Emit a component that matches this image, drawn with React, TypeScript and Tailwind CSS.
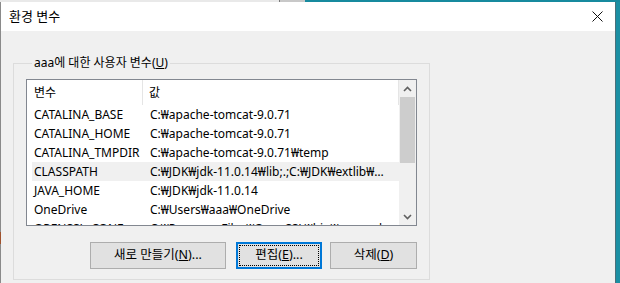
import React from "react";

const rows = [
  { name: "CATALINA_BASE", value: "C:₩apache-tomcat-9.0.71" },
  { name: "CATALINA_HOME", value: "C:₩apache-tomcat-9.0.71" },
  { name: "CATALINA_TMPDIR", value: "C:₩apache-tomcat-9.0.71₩temp" },
  { name: "CLASSPATH", value: "C:₩JDK₩jdk-11.0.14₩lib;.;C:₩JDK₩extlib₩mysql-connector.jar", hot: true },
  { name: "JAVA_HOME", value: "C:₩JDK₩jdk-11.0.14" },
  { name: "OneDrive", value: "C:₩Users₩aaa₩OneDrive" },
  { name: "OPENSSL_CONF", value: "C:₩Program Files₩OpenSSL₩bin₩openssl.cfg" },
];

const font = { fontFamily: '"Noto Sans", "Noto Sans CJK KR", sans-serif' };

const Chevron = ({ down }: { down?: boolean }) => (
  <svg width="9" height="6" viewBox="0 0 9 6" className={down ? "rotate-180" : ""}>
    <path d="M1 5 L4.5 1.5 L8 5" stroke="#606060" strokeWidth="1.6" fill="none" />
  </svg>
);

const App = () => {
  return (
    <div className="w-[620px] h-[283px] overflow-hidden flex flex-col bg-[#1b8fa3]" style={font}>
      {/* desktop strip above the window */}
      <div className="h-[2px] flex">
        <div className="w-[279px] bg-[#e9e9e9]" />
        <div className="w-px bg-[#7a7a7a]" />
        <div className="w-[25px] bg-[#c8c8c8]" />
        <div className="flex-1 bg-[#178a9e]" />
      </div>

      <div className="flex flex-1">
        <div className="w-px flex flex-col">
          <div className="h-[230px] bg-[#8a8a8a]" />
          <div className="h-[12px] bg-[#a0522d]" />
          <div className="flex-1 bg-[#8a8a8a]" />
        </div>

        {/* dialog */}
        <div className="w-[615px] flex flex-col bg-[#f0f0f0] border-r border-[#4a6f7a]">
          <div className="h-[29px] bg-white flex items-center justify-between pl-[8px] pr-[12px]">
            <span className="text-[13px] text-black leading-none">환경 변수</span>
            <svg width="11" height="11" viewBox="0 0 11 11">
              <path d="M0.5 0.5 L10.5 10.5 M10.5 0.5 L0.5 10.5" stroke="#111" strokeWidth="1" />
            </svg>
          </div>

          <div className="pl-[12px] pt-[24px]">
            <fieldset className="w-[417px] min-w-0 h-[225px] border border-[#dcdcdc] px-[12px] pt-[8px]">
              <legend className="ml-[6px] px-[2px] text-[12px] text-black leading-[16px]">
                aaa에 대한 사용자 변수(<span className="underline">U</span>)
              </legend>

              {/* list view */}
              <div className="w-[391px] h-[147px] border border-[#828790] bg-white flex overflow-hidden">
                <div className="flex-1 min-w-0 flex flex-col overflow-hidden">
                  <div className="h-[25px] shrink-0 flex items-center text-[12px] text-black">
                    <div className="w-[116px] h-full pl-[7px] flex items-center border-r border-[#e5e5e5]">변수</div>
                    <div className="flex-1 h-full pl-[6px] flex items-center border-r border-[#e5e5e5]">값</div>
                  </div>
                  {rows.map((r) => (
                    <div key={r.name} className="h-[19px] shrink-0 flex items-center text-[12px] text-black">
                      <div className={`flex h-full flex-1 min-w-0 ml-[5px] items-center ${r.hot ? "bg-[#f0f0f0]" : ""}`}>
                        <div className="w-[111px] shrink-0 pl-[2px] whitespace-nowrap">{r.name}</div>
                        <div className="flex-1 min-w-0 pl-[7px] pr-[6px] truncate">{r.value}</div>
                      </div>
                    </div>
                  ))}
                </div>

                {/* scrollbar */}
                <div className="w-[17px] shrink-0 bg-[#f0f0f0] flex flex-col">
                  <div className="h-[17px] flex items-center justify-center">
                    <Chevron />
                  </div>
                  <div className="h-[66px] mx-[1px] bg-[#cdcdcd]" />
                  <div className="flex-1" />
                  <div className="h-[17px] flex items-center justify-center">
                    <Chevron down />
                  </div>
                </div>
              </div>

              {/* buttons */}
              <div className="w-[391px] flex justify-end gap-[8px] mt-[16px] text-[12.5px] text-black">
                <button className="w-[136px] h-[27px] bg-[#e1e1e1] border border-[#adadad] mr-[2px]">
                  새로 만들기(<span className="underline">N</span>)...
                </button>
                <button className="w-[86px] h-[27px] bg-[#e1e1e1] border-2 border-[#0078d7] p-[1px]">
                  <div className="w-full h-full border border-dotted border-black flex items-center justify-center">
                    편집(<span className="underline">E</span>)...
                  </div>
                </button>
                <button className="w-[87px] h-[27px] bg-[#e1e1e1] border border-[#adadad]">
                  삭제(<span className="underline">D</span>)
                </button>
              </div>
            </fieldset>
          </div>
        </div>

        <div className="flex-1 bg-[#1b8fa3]" />
      </div>
    </div>
  );
};

export default App;
